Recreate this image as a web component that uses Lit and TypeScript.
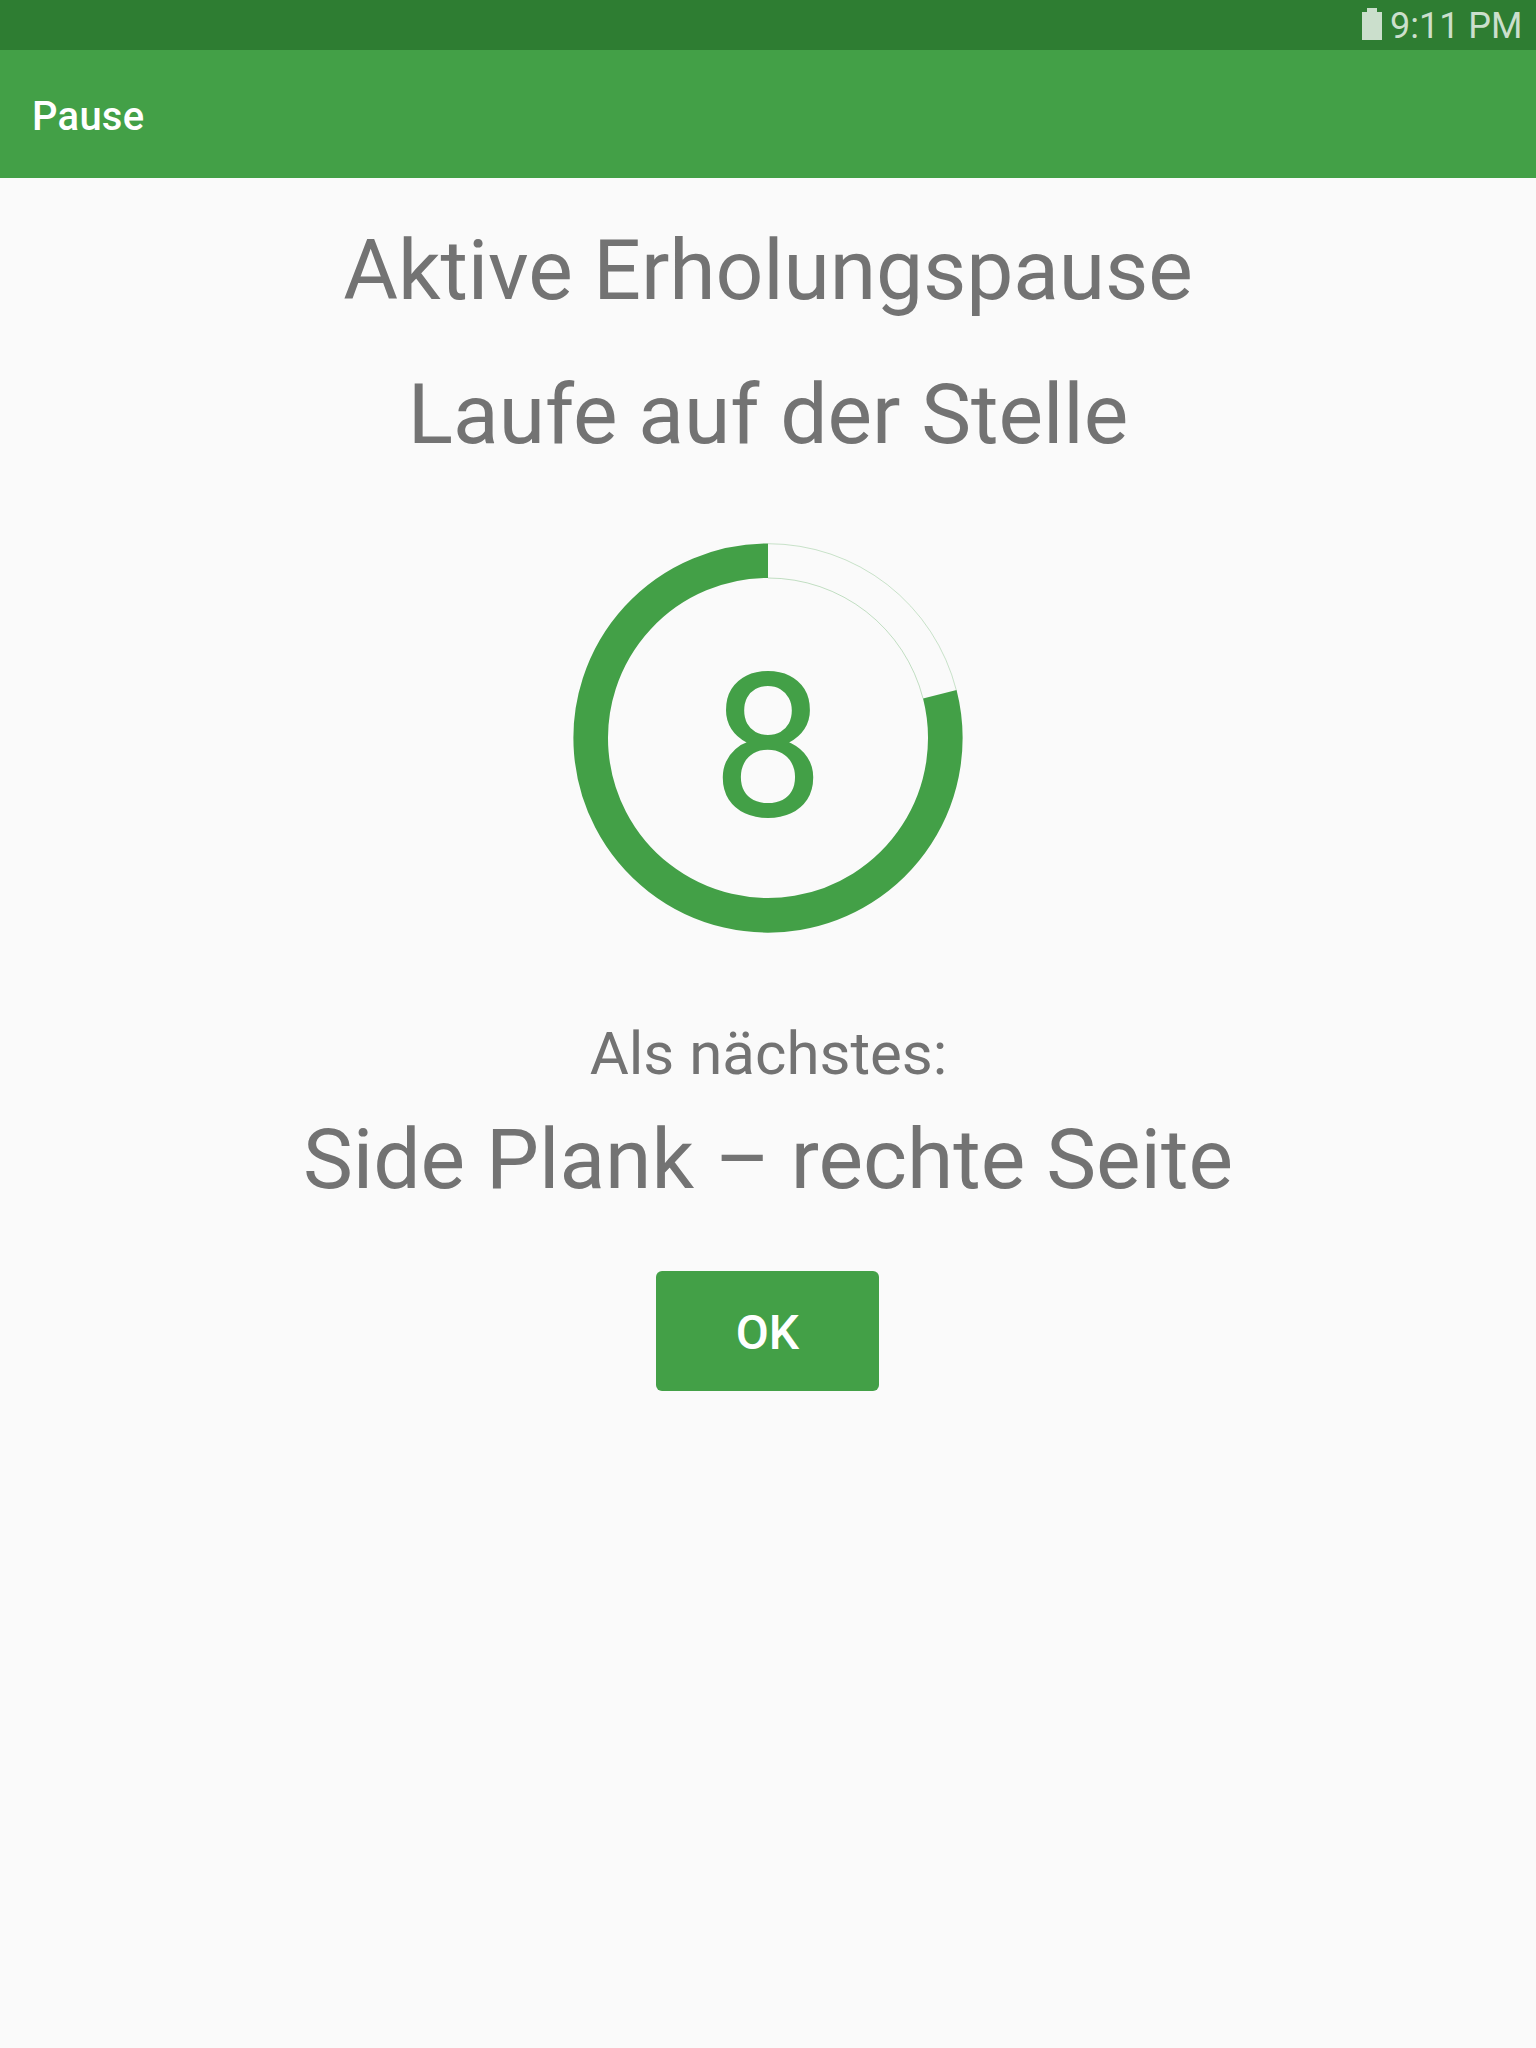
import { LitElement, html, css } from "lit";
import { customElement, property } from "lit/decorators.js";

// Countdown ring: the elapsed part is an open sector with hairline edges.
@customElement("countdown-ring")
export class CountdownRing extends LitElement {
  @property({ type: Number }) seconds = 0;
  @property({ type: Number }) elapsed = 0;

  static styles = css`
    :host { display: block; }
    svg { display: block; width: 390px; height: 390px; }
    .edge { fill: none; stroke: #43a047; }
    .outer { stroke-opacity: 0.28; stroke-width: 1; }
    .inner { stroke-opacity: 0.45; stroke-width: 0.7; }
    .arc { fill: none; stroke: #43a047; stroke-width: 34.6; }
    .count { fill: #43a047; font-family: Roboto, "Liberation Sans", sans-serif; font-size: 200px; text-anchor: middle; }
  `;

  private point(r: number, degrees: number): string {
    const a = (degrees * Math.PI) / 180;
    return `${195 + r * Math.sin(a)} ${195 - r * Math.cos(a)}`;
  }

  render() {
    const e = this.elapsed;
    const large = e < 180 ? 1 : 0;
    const edge = (r: number) => `M${this.point(r, 0)}A${r} ${r} 0 ${1 - large} 1 ${this.point(r, e)}`;
    return html`
      <svg viewBox="0 0 390 390">
        <path class="edge outer" d=${edge(194.3)} />
        <path class="edge inner" d=${edge(160)} />
        <path class="arc" d=${`M${this.point(177.3, e)}A177.3 177.3 0 ${large} 1 ${this.point(177.3, 360)}`} />
        <text class="count" x="195" y="273">${this.seconds}</text>
      </svg>`;
  }
}

@customElement("app-root")
export class AppRoot extends LitElement {
  static styles = css`
    :host { display: flex; flex-direction: column; height: 2048px; background: #fafafa; color: #737373; font-family: Roboto, "Liberation Sans", sans-serif; overflow: hidden; }
    .status { height: 50px; background: #2e7d32; display: flex; justify-content: flex-end; align-items: flex-start; padding-right: 13.5px; gap: 8px; color: #cbdfcc; font-size: 36px; line-height: 42px; box-sizing: border-box; }
    .battery { width: 20px; height: 32px; display: block; margin-top: 8px; fill: #cbdfcc; }
    .clock { margin-top: 5px; }
    .bar { height: 128px; background: #43a047; color: #fff; display: flex; align-items: center; padding: 5px 32px 0; font-size: 40px; font-weight: 500; letter-spacing: 0.25px; box-sizing: border-box; }
    .main { display: flex; flex-direction: column; align-items: center; }
    .title { font-size: 84px; line-height: 100px; white-space: nowrap; }
    .heading { margin-top: 43px; letter-spacing: -0.12px; }
    .sub { margin-top: 44px; letter-spacing: -0.05px; }
    .timer { margin-top: 78px; }
    .next { font-size: 60px; line-height: 72px; margin-top: 85px; padding-left: 1px; }
    .exercise { margin-top: 20px; }
    .ok { margin: 61px 1px 0 0; width: 223px; height: 120px; border: 0; border-radius: 6px; background: #43a047; color: #fff; font: 500 48px Roboto, "Liberation Sans", sans-serif; padding: 3px 0 0; }
  `;

  render() {
    return html`
      <div class="status">
        <svg class="battery" viewBox="0 0 20 32"><path d="M5 0h10v4h5v28H0V4h5z" /></svg>
        <span class="clock">9:11 PM</span>
      </div>
      <div class="bar">Pause</div>
      <div class="main">
        <div class="title heading">Aktive Erholungspause</div>
        <div class="title sub">Laufe auf der Stelle</div>
        <countdown-ring class="timer" seconds="8" elapsed="75.7"></countdown-ring>
        <div class="next">Als nächstes:</div>
        <div class="title exercise">Side Plank – rechte Seite</div>
        <button class="ok">OK</button>
      </div>`;
  }
}
